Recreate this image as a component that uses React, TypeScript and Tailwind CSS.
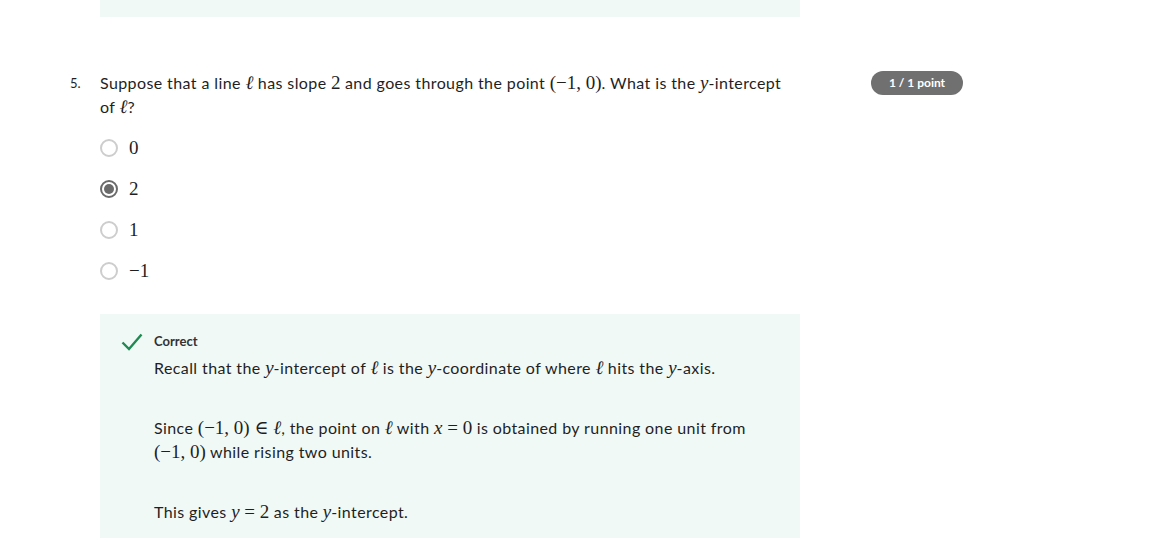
import React from "react";

const M = ({ children, i = false }: { children: React.ReactNode; i?: boolean }) => (
  <span
    className={`whitespace-nowrap text-[19px] leading-none tracking-normal ${i ? "italic" : ""}`}
    style={{ fontFamily: '"Liberation Serif", "DejaVu Serif", serif' }}
  >
    {children}
  </span>
);

const Ell = () => <M i>ℓ</M>;

function Radio({ checked, label }: { checked?: boolean; label: React.ReactNode }) {
  return (
    <div className="flex h-[41px] items-center">
      {checked ? (
        <div className="flex h-[18px] w-[18px] items-center justify-center rounded-full border-2 border-[#6a6a6a]">
          <div className="h-[10px] w-[10px] rounded-full bg-[#6a6a6a]" />
        </div>
      ) : (
        <div className="h-[18px] w-[18px] rounded-full border-2 border-[#cdcdcd]" />
      )}
      <div className="ml-[11px] text-[#1f1f1f]">{label}</div>
    </div>
  );
}

export default function App() {
  return (
    <div
      className="min-h-[549px] w-[1176px] bg-white text-[16px] leading-6 tracking-[0.4px] text-[#1f1f1f]"
      style={{ fontFamily: 'Lato, "Open Sans", sans-serif' }}
    >
      <div className="ml-[100px] h-[17px] w-[700px] bg-[#f1f9f7]" />
      <div className="mt-[54px] flex">
        <div className="w-[100px] pl-[70px] text-[13px] leading-6 tracking-normal text-[#1f1f1f]">5.</div>
        <div className="w-[700px]">
          <div className="pr-[6px]">
            Suppose that a line <Ell /> has slope <M>2</M> and goes through the point <M>(−1, 0)</M>. What is
            the <M i>y</M>-intercept of <Ell />?
          </div>
          <div className="mt-[8px]">
            <Radio label={<M>0</M>} />
            <Radio checked label={<M>2</M>} />
            <Radio label={<M>1</M>} />
            <Radio label={<M>−1</M>} />
          </div>
          <div className="mt-[23px] bg-[#f1f9f7] pb-[14px] pl-[21px] pr-[20px] pt-[19px]">
            <div className="flex items-start">
              <svg width="22" height="18" viewBox="0 0 22 18" className="shrink-0">
                <path d="M1.5 9.5 L8 16 L20.5 1.5" fill="none" stroke="#1e8a52" strokeWidth="2.4" />
              </svg>
              <div className="ml-[11px]">
                <div className="text-[13px] font-bold leading-[16px] tracking-normal text-[#333]">Correct</div>
                <div className="mt-[7px] leading-6 text-[#1f1f1f]">
                  Recall that the <M i>y</M>-intercept of <Ell /> is the <M i>y</M>-coordinate of where <Ell /> hits
                  the <M i>y</M>-axis.
                </div>
                <div className="mt-[36px] pr-[10px] leading-6">
                  Since <M>(−1, 0) ∈ </M>
                  <Ell />, the point on <Ell /> with <M><i>x</i> = 0</M> is obtained by running one unit from{" "}
                  <M>(−1, 0)</M> while rising two units.
                </div>
                <div className="mt-[36px] leading-6">
                  This gives <M><i>y</i> = 2</M> as the <M i>y</M>-intercept.
                </div>
              </div>
            </div>
          </div>
        </div>
        <div className="ml-[71px]">
          <div className="flex h-[24px] w-[92px] items-center justify-center rounded-full bg-[#707070] text-[12px] font-bold tracking-normal text-white">
            1 / 1 point
          </div>
        </div>
      </div>
    </div>
  );
}
